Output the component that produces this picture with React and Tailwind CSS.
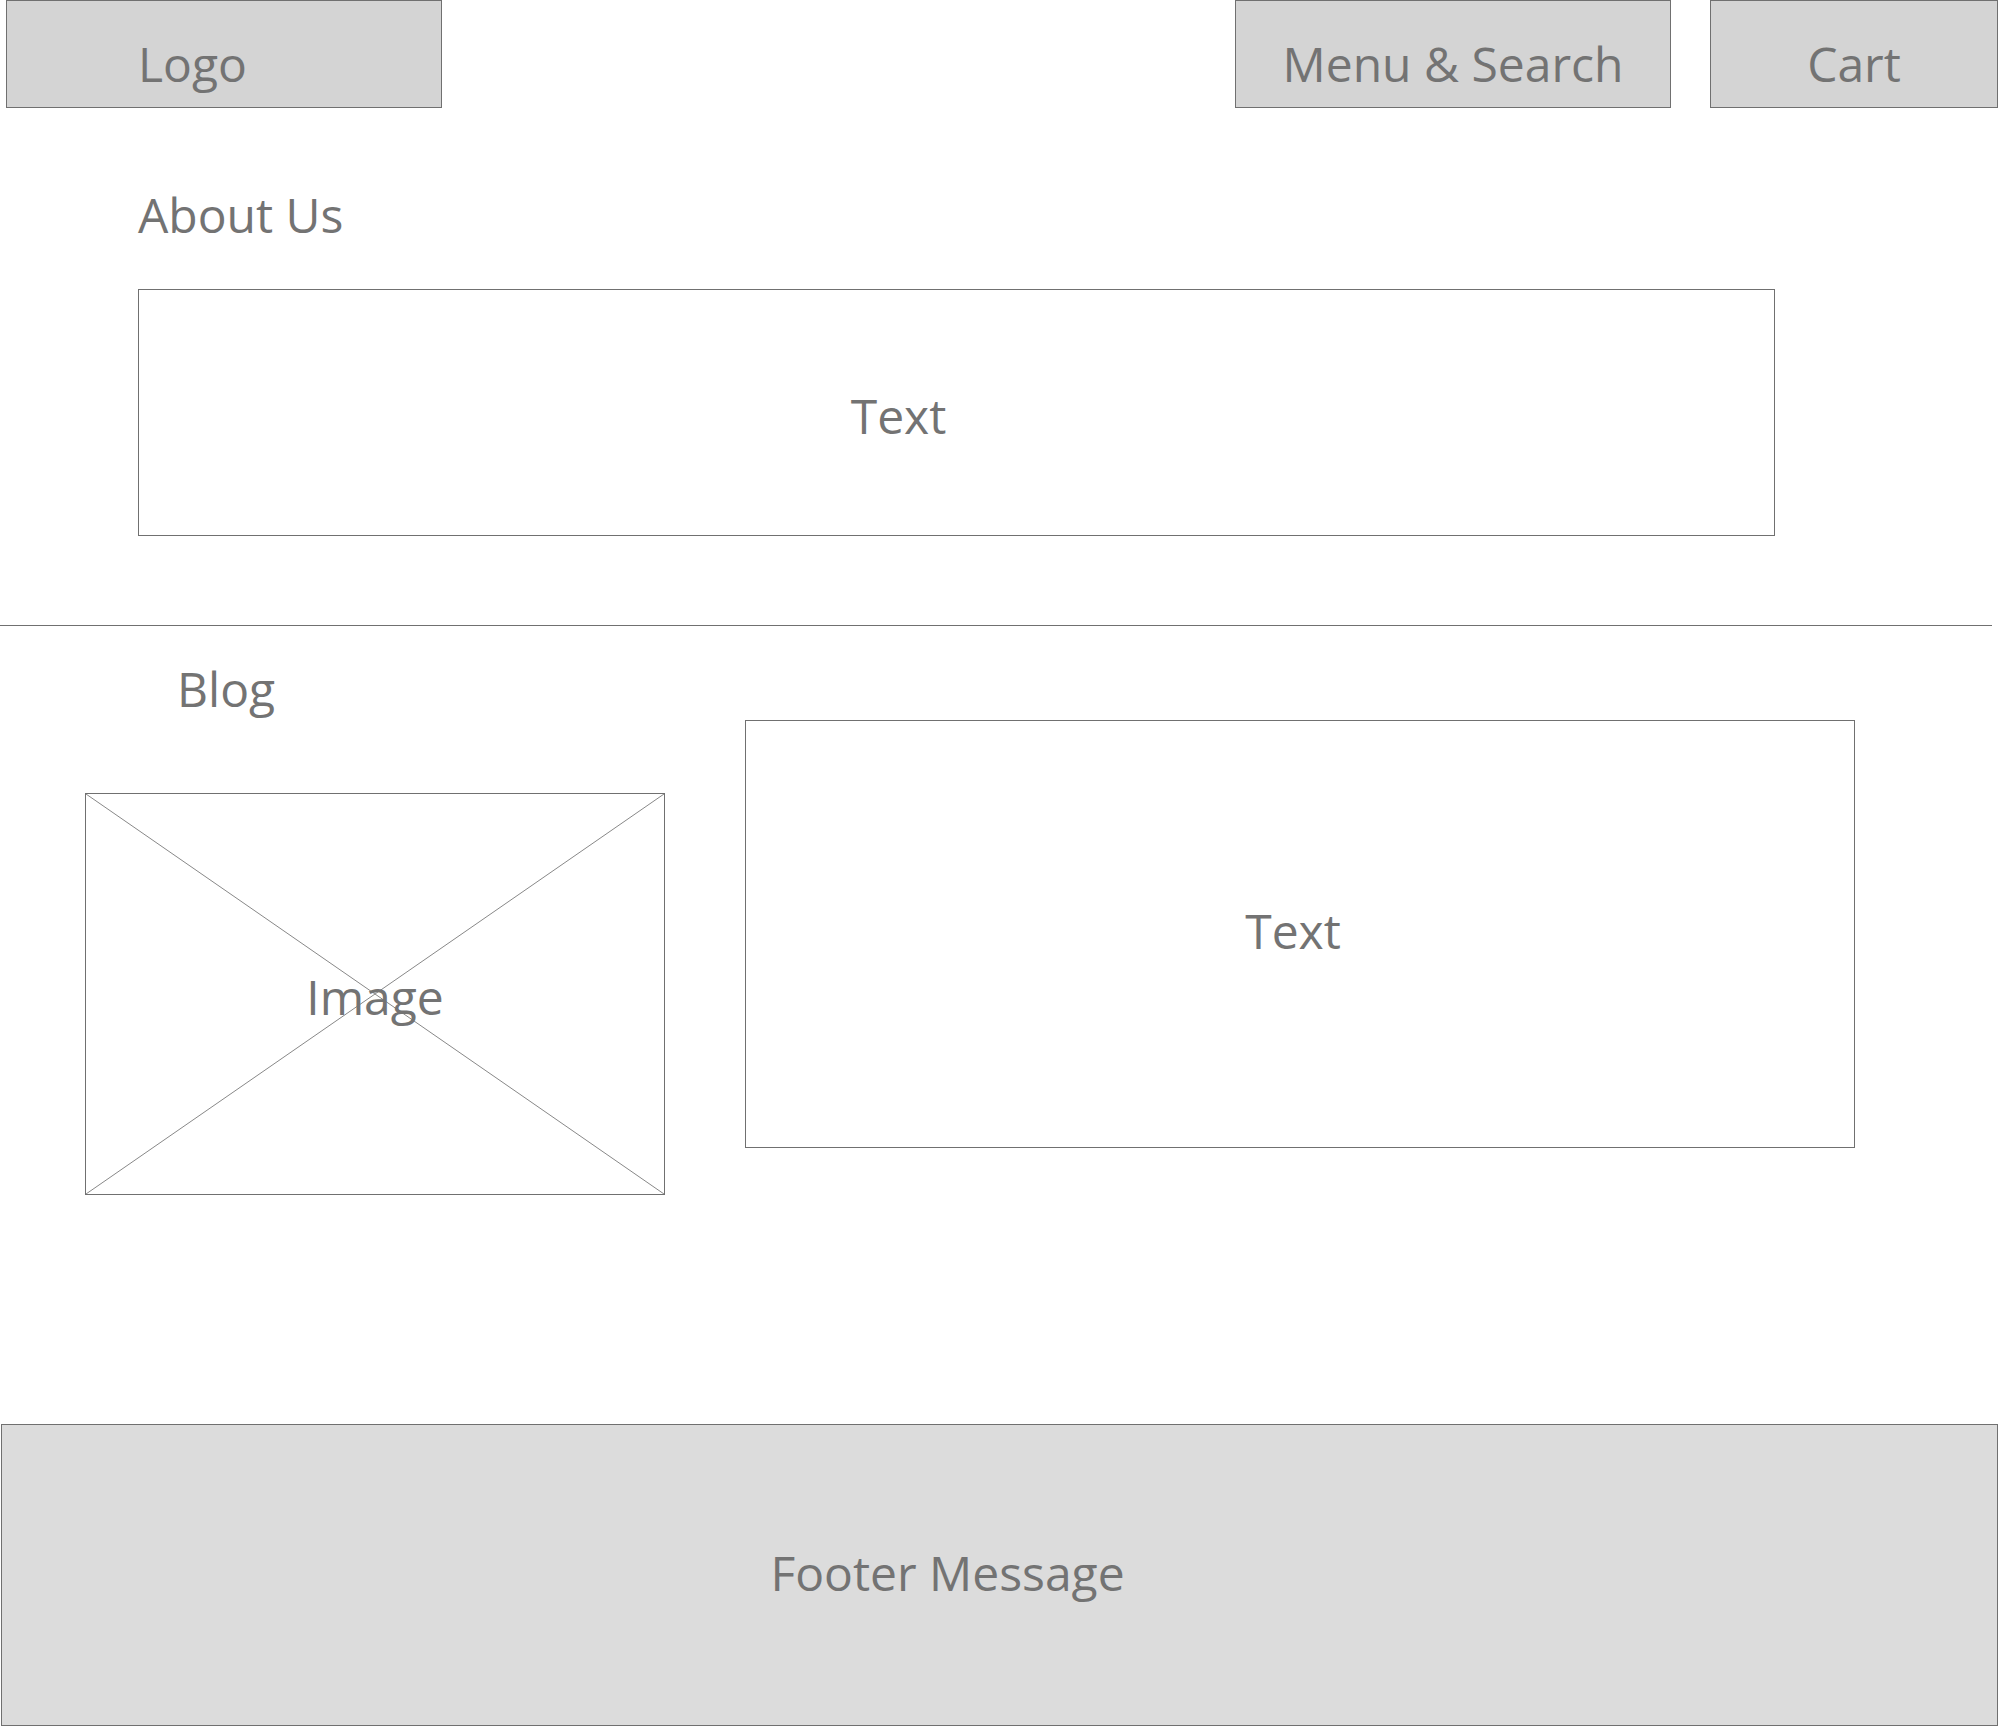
const FONT = "font-['Open_Sans','Noto_Sans',sans-serif]";

function Box({ className = "", children }) {
  return (
    <div className={`border border-[#707070] flex items-center justify-center ${className}`}>
      {children}
    </div>
  );
}

function ImagePlaceholder() {
  return (
    <div className="relative w-[580px] h-[402px] mt-[73px] border border-[#707070] flex items-center justify-center">
      <svg
        className="absolute inset-0 w-full h-full"
        viewBox="0 0 100 100"
        preserveAspectRatio="none"
      >
        <line x1="0" y1="0" x2="100" y2="100" stroke="#888888" strokeWidth="1" vectorEffect="non-scaling-stroke" />
        <line x1="100" y1="0" x2="0" y2="100" stroke="#888888" strokeWidth="1" vectorEffect="non-scaling-stroke" />
      </svg>
      <span className="relative pt-[6px]">Image</span>
    </div>
  );
}

export default function App() {
  return (
    <div className={`w-[1998px] h-[1726px] bg-white flex flex-col text-[48px] leading-none text-[#737373] ${FONT}`}>
      {/* Header */}
      <div className="flex h-[108px]">
        <div className="ml-[6px] w-[436px] h-full bg-[#d4d4d4] border border-[#707070] pl-[131px] pt-[39px]">
          Logo
        </div>
        <div className="flex-1" />
        <div className="w-[436px] h-full bg-[#d4d4d4] border border-[#707070] flex justify-center pt-[39px]">
          Menu &amp; Search
        </div>
        <div className="ml-[39px] w-[288px] h-full bg-[#d4d4d4] border border-[#707070] flex justify-center pt-[39px]">
          Cart
        </div>
      </div>

      {/* About Us */}
      <h2 className="ml-[138px] mt-[83px]">About Us</h2>
      <Box className="ml-[138px] mt-[50px] w-[1637px] h-[247px] pr-[116px] pt-[6px]">Text</Box>

      <div className="mt-[89px] w-[1992px] h-px bg-[#707070]" />

      {/* Blog */}
      <h2 className="ml-[177px] mt-[39px]">Blog</h2>
      <div className="flex items-start ml-[85px] mt-[7px] gap-[80px]">
        <ImagePlaceholder />
        <Box className="w-[1110px] h-[428px] pr-[14px] pb-[6px]">Text</Box>
      </div>

      {/* Footer */}
      <div className="mt-auto ml-px w-[1997px] h-[302px] bg-[#dcdcdc] border border-[#707070] flex items-center justify-center pr-[104px] pb-[4px]">
        Footer Message
      </div>
    </div>
  );
}
